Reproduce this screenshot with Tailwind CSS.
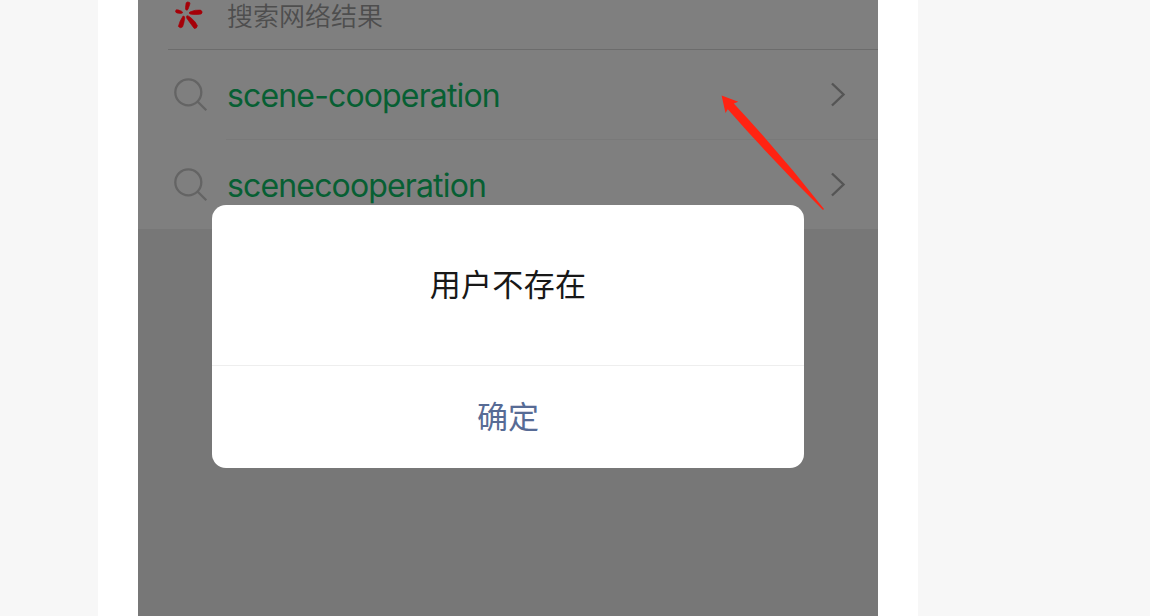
<!DOCTYPE html>
<html lang="zh-CN">
<head>
    <meta charset="UTF-8">
    <meta name="viewport" content="width=device-width, initial-scale=1.0">
    <title>搜索网络结果</title>
    <script src="https://cdn.jsdelivr.net/npm/@tailwindcss/browser@4"></script>
</head>
<body class="bg-[#f7f7f7] font-['Inter','Noto_Sans_CJK_SC',sans-serif] overflow-hidden">
    <main class="ml-[98px] w-[820px] h-[616px] bg-white px-10">
        <div class="relative h-full bg-[#777777] overflow-hidden">
            <section class="h-[229px] bg-[#7f7f7f]">
                <header class="ml-[30px] h-[50px] flex items-start border-b border-[#6c6c6c]">
                    <svg class="w-[30px] h-[30px] ml-[6px] mr-[23px] shrink-0" viewBox="0 0 30 30" fill="#a50008" stroke="#a50008" stroke-width=".7">
                        <path d="M12.2 2.8Q13.6 1.2 15.6 2.5Q16.3 3 15.6 4.8L14 9.3Q13.2 10.8 11.9 9.8Q11 9 12.2 2.8Z"/>
                        <path d="M2 9.9Q3.5 9.3 7.5 11.2Q9.4 12.1 8.2 13.1Q7.4 13.8 3 13Q.8 12.5 2 9.9Z"/>
                        <path d="M15.8 12Q21 9.6 26.6 10.1Q29.5 11.9 27.2 14Q21 15 16 14Q14.5 13 15.8 12Z"/>
                        <path d="M9.1 16Q10.8 16 10.7 18Q10 23.5 8.6 26.8Q6.5 28.8 4.4 26.4Q5.5 21.2 9.1 16Z"/>
                        <path d="M12.9 15.8Q14.2 15.3 17.5 18.3Q21.8 22 23.4 25.7Q22.8 28.8 20.2 28.4Q16 22.8 12.8 18.2Q12.2 16.5 12.9 15.8Z"/>
                    </svg>
                    <h1 class="pt-px text-[26px] leading-[32px] text-[#4e4e4e] font-[350]">搜索网络结果</h1>
                </header>
                <div class="h-[89px] flex items-center pl-9 pr-[32px]">
                    <svg class="w-[34px] h-[34px] mr-[19px] shrink-0" viewBox="0 0 34 34" fill="none" stroke="#646464" stroke-width="2.3">
                        <circle cx="14.3" cy="14.3" r="13"/>
                        <path d="M23.5 23.5L32.3 32.3"/>
                    </svg>
                    <span class="pt-0.5 text-[32px] leading-[40px] tracking-[-0.85px] text-[#075f33]">scene-cooperation</span>
                    <svg class="w-[17px] h-[26px] ml-auto" viewBox="0 0 17 26" fill="none" stroke="#555555" stroke-width="2.4">
                        <path d="M3 1.5L14.5 12.5L3 23.5"/>
                    </svg>
                </div>
                <div class="ml-[88px] h-px bg-[#797979]"></div>
                <div class="h-[89px] flex items-center pl-9 pr-[32px]">
                    <svg class="w-[34px] h-[34px] mr-[19px] shrink-0" viewBox="0 0 34 34" fill="none" stroke="#646464" stroke-width="2.3">
                        <circle cx="14.3" cy="14.3" r="13"/>
                        <path d="M23.5 23.5L32.3 32.3"/>
                    </svg>
                    <span class="pt-0.5 text-[32px] leading-[40px] tracking-[-0.85px] text-[#075f33]">scenecooperation</span>
                    <svg class="w-[17px] h-[26px] ml-auto" viewBox="0 0 17 26" fill="none" stroke="#555555" stroke-width="2.4">
                        <path d="M3 1.5L14.5 12.5L3 23.5"/>
                    </svg>
                </div>
            </section>

            <!-- dialog -->
            <div class="absolute left-[74px] top-[204.5px] w-[592px] h-[263.5px] rounded-[14px] bg-white flex flex-col text-center">
                <p class="h-[161px] leading-[159px] text-[31px] tracking-[0.3px] text-[#181818] border-b border-[#eeeeee]">用户不存在</p>
                <button type="button" class="grow text-[31px] text-[#576b95]">确定</button>
            </div>

            <!-- pointer arrow -->
            <svg class="absolute left-[580px] top-[90px] w-[110px] h-[124px]" viewBox="0 0 110 124" fill="#ff2312">
                <path d="M3.6 5.6L20.3 11.7L15.8 13.5Q62 63 106 119L105 120Q56 72 9.8 19.2L7.5 23Z"/>
            </svg>
        </div>
    </main>
</body>
</html>
